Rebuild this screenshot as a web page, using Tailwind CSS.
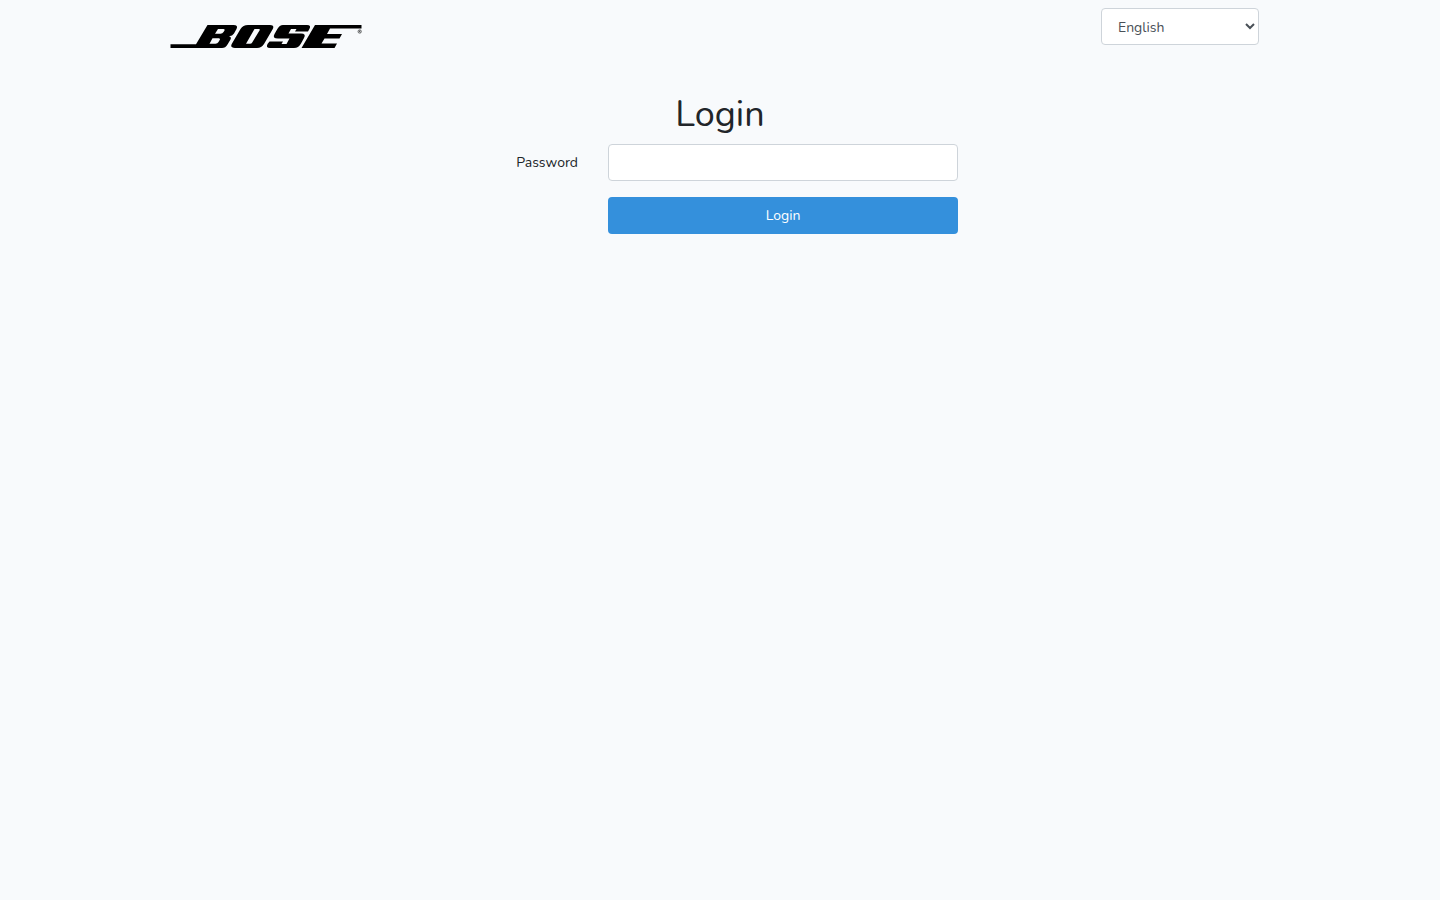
<!DOCTYPE html>
<html lang="en">
<head>
<meta charset="utf-8">
<meta name="viewport" content="width=device-width, initial-scale=1">
<title>Login</title>
<script src="https://cdn.jsdelivr.net/npm/@tailwindcss/browser@4"></script>
</head>
<body class="min-h-screen bg-[#f8fafc] font-['Nunito','Lato',sans-serif] text-[14px] leading-[23px] text-[#212529]">
<header class="mx-auto flex max-w-[1140px] items-start justify-between pr-[31px] pl-5 pt-2">
  <a href="#" aria-label="Bose" class="mt-4 block">
    <svg class="block h-[26px] w-48" viewBox="170 24 192 26" aria-hidden="true">
      <path fill-rule="evenodd" d="M170.500 44.300H196L207.500 25H233.500Q238.500 25 236.500 29L234 33.500Q232.500 36 229 36.300Q231.800 37 230.500 39.500L227.500 44.500Q225.500 48 222 48H170.500ZM218 29L215 33.700H220.500Q222.500 33.700 223.500 32L224.500 30.500Q225.300 29 223.500 29ZM212.500 38.200L209.500 43.700H215.500Q217.500 43.700 218.500 42L219.700 40Q220.700 38.200 218.700 38.200Z"/>
      <path fill-rule="evenodd" d="M248 25H270Q275 25 272.500 29.500L264 44Q261.500 48 257 48H235Q229.500 48 232 43.500L240.500 29Q243 25 248 25ZM254.500 29L246 43.700H250Q251.500 43.700 252.200 42.400L259.500 30.500Q260.500 29 258.700 29Z"/>
      <path d="M283 25H307Q311.500 25 309.500 28.800L308 31.500H295L296.500 29H291L288.500 33.500H301Q306.500 33.500 304 38L301 43.500Q298.500 48 294 48H270Q265.500 48 267.500 44L269.500 41.500H283L281.500 44H286.500L289.500 38.500H278Q272 38.500 274.500 34L277.500 28.800Q279.500 25 283 25Z"/>
      <path d="M315 25H361.500V28.500H330L327 34H342L339.500 38.500H324.500L321.500 43.500H337L334.500 48H301.500Z"/>
      <circle cx="359.700" cy="31.500" r="1.700" fill="none" stroke="#000" stroke-width=".5"/>
      <path d="M359.200 32.500V30.700H360.200V31.500H359.200M359.700 31.500L360.400 32.500" fill="none" stroke="#000" stroke-width=".4"/>
    </svg>
  </a>
  <select aria-label="Language" class="h-[37px] w-[158px] rounded border border-[#ced4da] bg-white px-3 pt-0.5 text-[#495057]">
    <option>English</option>
  </select>
</header>
<main class="mx-auto max-w-[1140px] pt-[43px]">
  <h1 class="mb-2 text-center text-[36px] font-normal leading-[43px]">Login</h1>
  <form class="grid grid-cols-[428px_350px] gap-x-[30px] gap-y-4">
    <label for="password" class="py-[7px] text-right">Password</label>
    <input id="password" type="password" class="h-[37px] w-full rounded border border-[#ced4da] bg-white px-3">
    <button type="submit" class="col-start-2 h-[37px] rounded bg-[#3490dc] text-white">Login</button>
  </form>
</main>
</body>
</html>
